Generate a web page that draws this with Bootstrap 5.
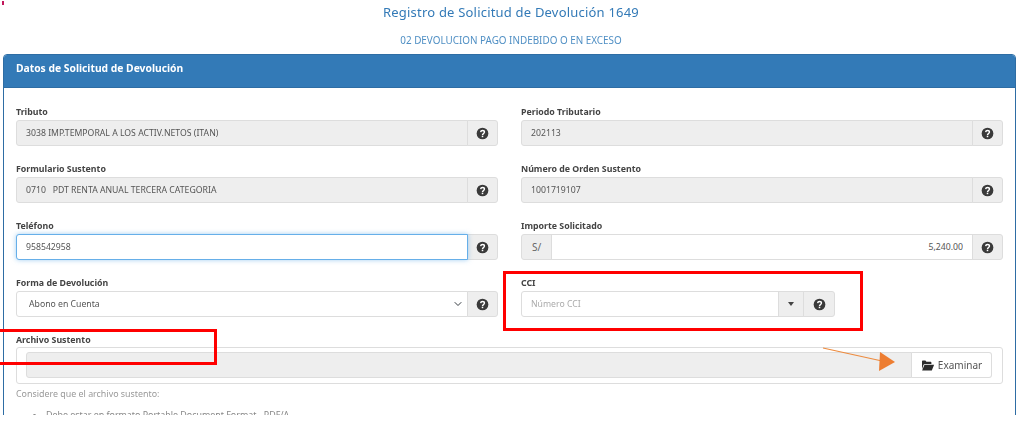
<!DOCTYPE html>
<html lang="es"><head><meta charset="utf-8"><title>Registro de Solicitud de Devolución 1649</title>
<link href="https://cdn.jsdelivr.net/npm/bootstrap@5.3.0/dist/css/bootstrap.min.css" rel="stylesheet">
<style>
html,body{background:#fff;overflow:hidden}
body{font-family:"Noto Sans","Liberation Sans",sans-serif;color:#555}
.stage{position:relative;width:1022px;height:425px;overflow:hidden;background:#fff}
.clip{height:415px;overflow:hidden;filter:blur(.45px)}
.ttl{color:#337ab7;font-size:13px;letter-spacing:.2px;line-height:18px;padding-top:3px;margin:0;font-weight:400;text-align:center}
.subttl{color:#4f8fc4;font-size:9.9px;line-height:14px;margin:0;padding-top:12px;text-align:center}
.panel{margin:7px 6px 0 3px;border:1px solid #2e6da4;border-radius:4px;overflow:hidden}
.panel-head{background:#337ab7;color:#fff;font-size:10.3px;font-weight:700;height:33px;padding:6px 12px;line-height:14px;border-bottom:1px solid #2e6da4}
.panel-main{padding:17px 12px 0;background:#fff}
.fields{--bs-gutter-x:23px;--bs-gutter-y:0}
.fld{margin-bottom:16px}
.lbl{display:block;font-size:8.8px;font-weight:700;color:#444;line-height:14px;margin:0 0 1px}
.lbl-tight{margin-bottom:0}
.input-group .form-control,.input-group .form-select,.addon{height:26px;font-size:8.7px;border-color:#ddd;line-height:14px;border-radius:3px}
.input-group .form-control{padding:4px 9px;color:#555}
.input-group .form-control:disabled{background:#eee;opacity:1}
.input-group .form-select{padding:4px 10px 4px 12px;color:#555;background-size:10px 8px;background-position:right 4px center}
.addon{display:flex;align-items:center;justify-content:center;background:#eee;color:#666;padding:0;width:31px;border:1px solid #ddd}
.money{width:31px;font-size:10px}
.caretbox{width:26px}
.tinycaret{width:0;height:0;border:3.5px solid transparent;border-top:4px solid #444;border-bottom:0}
.focused.form-control{border-color:#66afe9;box-shadow:0 0 5px rgba(102,175,233,.6);position:relative;z-index:3}
.amount{text-align:right}
.ccibox{width:314px}
.ccibox .addon:last-child{width:32px}
.ccibox .form-control::placeholder{color:#aaa}
.filebox{border:1px solid #ddd;border-radius:3px;padding:4px 10px 5px 9px;height:37px;background:#fff}
.filebox .form-control{height:26px}
.pick{width:81px;height:26px;background:#fff;border:1px solid #ddd;border-left:1px solid #e6e6e6;color:#555;font-size:10px;padding:0;display:flex;align-items:center;justify-content:center;gap:3px;border-radius:0 3px 3px 0}
.note{font-size:8.9px;line-height:14px;color:#999;margin:3px 0 0}
.notes{font-size:8.9px;line-height:14px;color:#888;margin:7px 0 0;padding-left:30px}
.mark-box{position:absolute;border:3px solid #f00;background:transparent}
.mark-a{left:503px;top:271px;width:360px;height:60px}
.mark-b{left:-10px;top:329px;width:227px;height:36px}
.arrow{position:absolute;left:820px;top:344px}
.speck{position:absolute;left:2px;top:1px;width:2px;height:4px;background:#c2185b}
</style></head><body>
<svg width="0" height="0" class="d-block"><defs>
<symbol id="help" viewBox="0 0 12 12"><circle cx="6" cy="6" r="5.4" fill="#3a3a3a"/><path d="M4.3 4.7C4.4 3.7 5.1 3.2 6 3.2c1 0 1.8.6 1.8 1.5 0 1.4-1.8 1.3-1.8 2.6" fill="none" stroke="#fff" stroke-width="1.3"/><rect x="5.3" y="8" width="1.4" height="1.4" fill="#fff"/></symbol>
</defs></svg>
<div class="stage">
<div class="clip">
<h1 class="ttl">Registro de Solicitud de Devolución 1649</h1>
<p class="subttl">02 DEVOLUCION PAGO INDEBIDO O EN EXCESO</p>
<div class="panel">
<div class="panel-head">Datos de Solicitud de Devolución</div>
<div class="panel-main">
<div class="row fields">
<div class="col-6 fld"><label class="lbl">Tributo</label><div class="input-group"><input class="form-control" disabled value="3038 IMP.TEMPORAL A LOS ACTIV.NETOS (ITAN)"><span class="addon"><svg width="13" height="13"><use href="#help"/></svg></span></div></div>
<div class="col-6 fld"><label class="lbl">Periodo Tributario</label><div class="input-group"><input class="form-control" disabled value="202113"><span class="addon"><svg width="13" height="13"><use href="#help"/></svg></span></div></div>
<div class="col-6 fld"><label class="lbl">Formulario Sustento</label><div class="input-group"><input class="form-control" disabled value="0710   PDT RENTA ANUAL TERCERA CATEGORIA"><span class="addon"><svg width="13" height="13"><use href="#help"/></svg></span></div></div>
<div class="col-6 fld"><label class="lbl">Número de Orden Sustento</label><div class="input-group"><input class="form-control" disabled value="1001719107"><span class="addon"><svg width="13" height="13"><use href="#help"/></svg></span></div></div>
<div class="col-6 fld"><label class="lbl">Teléfono</label><div class="input-group"><input class="form-control focused" value="958542958"><span class="addon"><svg width="13" height="13"><use href="#help"/></svg></span></div></div>
<div class="col-6 fld"><label class="lbl">Importe Solicitado</label><div class="input-group"><span class="addon money">S/</span><input class="form-control amount" value="5,240.00"><span class="addon"><svg width="13" height="13"><use href="#help"/></svg></span></div></div>
<div class="col-6 fld"><label class="lbl">Forma de Devolución</label><div class="input-group"><select class="form-select"><option>Abono en Cuenta</option></select><span class="addon"><svg width="13" height="13"><use href="#help"/></svg></span></div></div>
<div class="col-6 fld"><label class="lbl">CCI</label><div class="input-group ccibox"><input class="form-control" placeholder="Número CCI"><span class="addon caretbox"><span class="tinycaret"></span></span><span class="addon"><svg width="13" height="13"><use href="#help"/></svg></span></div></div>
</div>
<label class="lbl lbl-tight">Archivo Sustento</label>
<div class="filebox"><div class="input-group"><input class="form-control" disabled aria-label="Archivo"><button type="button" class="pick"><svg width="14" height="11" viewBox="0 0 13 11"><path d="M.5 9.2V1.6C.5 1 .9.6 1.5.6h2.4l1 1.2h4c.6 0 1 .4 1 1V4H3.4C2.8 4 2.4 4.2 2 4.8z" fill="#2b2b2b"/><path d="M3 4.8h9.6L10.3 10.4H.6z" fill="#2b2b2b"/></svg>Examinar</button></div></div>
<p class="note">Considere que el archivo sustento:</p>
<ul class="notes"><li>Debe estar en formato Portable Document Format - PDF/A</li></ul>
</div>
</div>
</div>
<div class="mark-box mark-a"></div>
<div class="mark-box mark-b"></div>
<svg class="arrow" width="80" height="30" viewBox="0 0 80 30"><path d="M3 4 62 17" stroke="#ed8b3f" stroke-width="1.2"/><path d="M60 8 75 18 59 27z" fill="#ed7d31"/></svg>
<span class="speck"></span>
</div>
<script src="https://cdn.jsdelivr.net/npm/bootstrap@5.3.0/dist/js/bootstrap.bundle.min.js"></script>
</body></html>
